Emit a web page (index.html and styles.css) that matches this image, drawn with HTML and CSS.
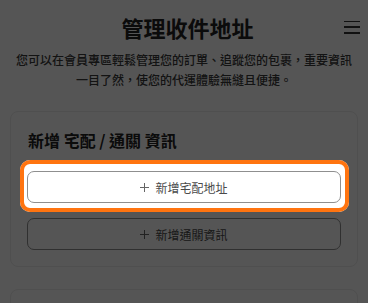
FILE: index.html
```html
<!DOCTYPE html>
<html lang="zh-Hant">
<head>
  <meta charset="UTF-8">
  <meta name="viewport" content="width=device-width, initial-scale=1.0">
  <title>管理收件地址</title>
  <link rel="stylesheet" href="styles.css">
</head>
<body>
  <header class="topbar">
    <span></span>
    <h1>管理收件地址</h1>
    <button class="menu" aria-label="選單">
      <span></span><span></span><span></span>
    </button>
  </header>

  <p class="intro">您可以在會員專區輕鬆管理您的訂單、追蹤您的包裹，重要資訊一目了然，使您的代運體驗無縫且便捷。</p>

  <!-- Add info card -->
  <section class="card">
    <h2>新增 宅配 / 通關 資訊</h2>
    <div class="actions">
      <button class="add-btn" id="addAddress"><span class="plus"></span>新增宅配地址</button>
      <button class="add-btn"><span class="plus"></span>新增通關資訊</button>
    </div>
  </section>

  <section class="card card-next"></section>

  <!-- Guide spotlight -->
  <div class="spotlight"></div>
</body>
</html>
```

FILE: styles.css
```css
/* Page */
body {
  margin: 0;
  background: #fff;
  font-family: "Noto Sans CJK TC", "Noto Sans", sans-serif;
  color: #333;
  position: relative;
  min-height: 100vh;
  overflow: hidden;
}

.topbar {
  display: grid;
  grid-template-columns: 1fr auto 1fr;
  align-items: center;
  padding: 12px 8px 0 15px;
}

.topbar h1 {
  margin: 0;
  font-size: 22px;
  line-height: 30px;
  font-weight: 700;
  color: #222;
}

.menu {
  justify-self: end;
  width: 16px;
  height: 13px;
  padding: 0;
  border: none;
  background: none;
  display: flex;
  flex-direction: column;
  justify-content: space-between;
  cursor: pointer;
}

.menu span {
  display: block;
  height: 1.5px;
  background: #333;
}

.intro {
  margin: 8px 0 0;
  padding: 0 15px;
  font-size: 12px;
  line-height: 20px;
  text-align: center;
  color: #3a3a3a;
  font-weight: 500;
}

/* Cards */
.card {
  margin: 21px 10px 0;
  padding: 16px;
  border: 1px solid #ececec;
  border-radius: 8px;
  background: #fff;
}

.card h2 {
  margin: 0;
  font-size: 16px;
  line-height: 24px;
  font-weight: 600;
  color: #222;
  padding-left: 1px;
}

.actions {
  display: flex;
  flex-direction: column;
  gap: 15px;
  margin-top: 19px;
}

.add-btn {
  height: 32px;
  border: 1px solid #8f8f8f;
  border-radius: 7px;
  background: #fff;
  font-family: inherit;
  font-size: 12px;
  color: #4a4a4a;
  display: flex;
  align-items: center;
  justify-content: center;
  gap: 6px;
  cursor: pointer;
}

.plus {
  width: 9px;
  height: 9px;
  position: relative;
}

.plus::before,
.plus::after {
  content: "";
  position: absolute;
  background: #666;
}

.plus::before {
  left: 0;
  right: 0;
  top: 4px;
  height: 1px;
}

.plus::after {
  top: 0;
  bottom: 0;
  left: 4px;
  width: 1px;
}

.card-next {
  margin-top: 22px;
  height: 80px;
}

/* Guide overlay */
.spotlight {
  position: absolute;
  left: 20px;
  top: 160px;
  width: 329px;
  height: 52px;
  box-sizing: border-box;
  border: 4px solid #ff7410;
  border-radius: 10px;
  box-shadow: 0 0 0 9999px rgba(0, 0, 0, 0.665);
  pointer-events: none;
}
```
